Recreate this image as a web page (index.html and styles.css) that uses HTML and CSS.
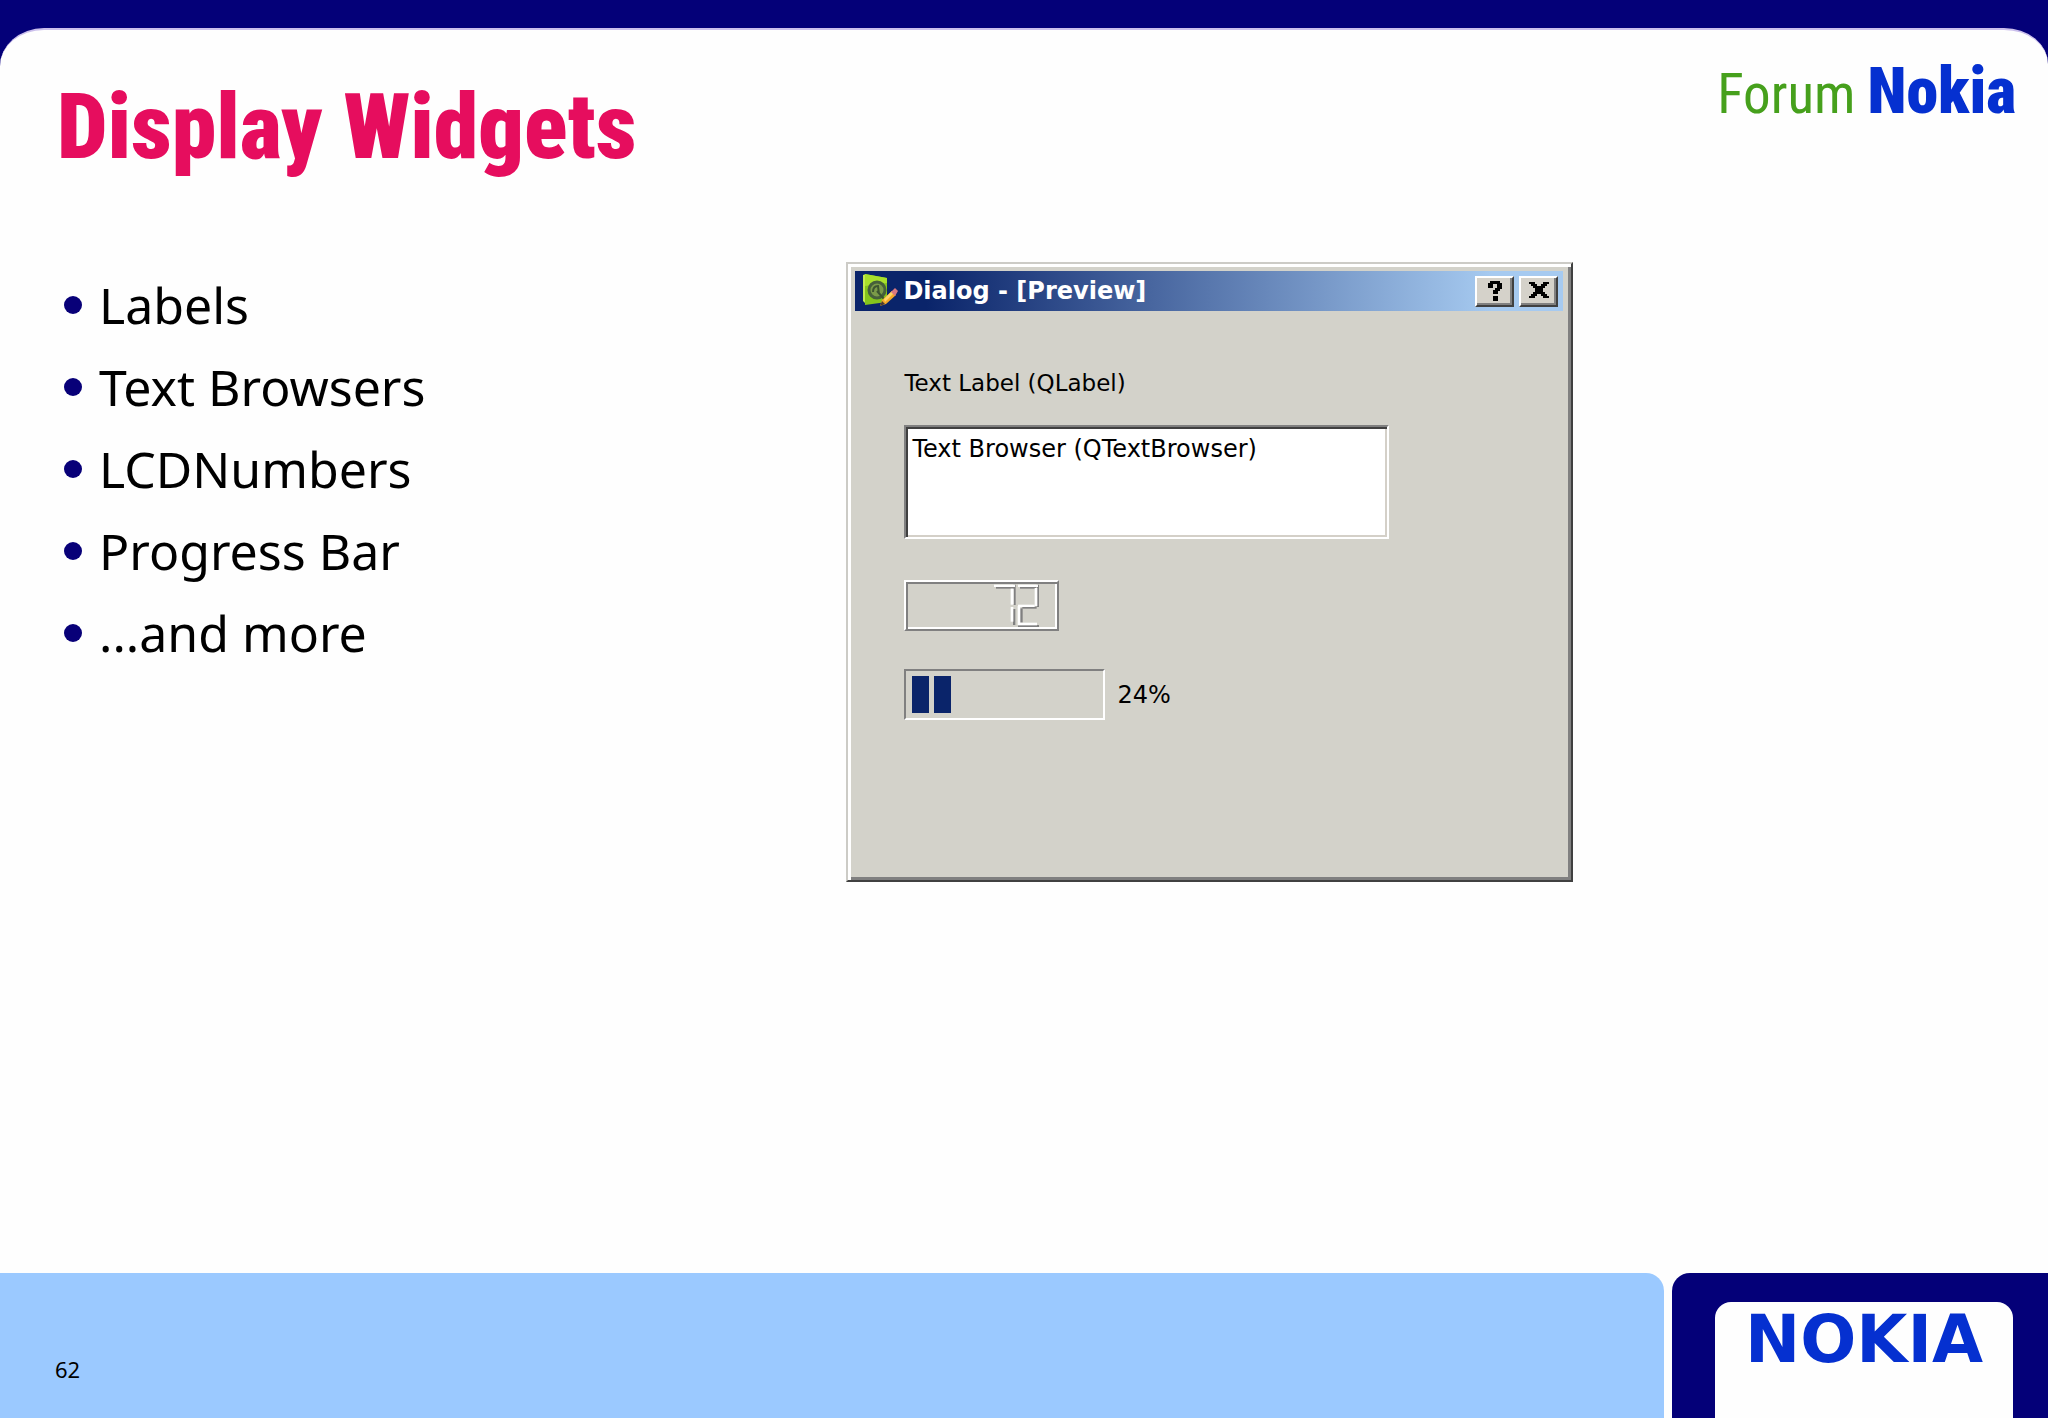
FILE: index.html
```
<!DOCTYPE html>
<html lang="en">
<head>
<meta charset="utf-8">
<title>Display Widgets</title>
<link rel="stylesheet" href="styles.css">
</head>
<body>
<main class="slide">
  <header class="slide-header">
    <h1 class="slide-title">Display Widgets</h1>
    <p class="forum-logo"><span class="forum">Forum</span><span class="brand">Nokia</span></p>
  </header>
  <div class="content">
    <ul class="topics">
      <li>Labels</li>
      <li>Text Browsers</li>
      <li>LCDNumbers</li>
      <li>Progress Bar</li>
      <li>...and more</li>
    </ul>
    <section class="dialog" aria-label="Dialog preview">
      <div class="titlebar">
        <svg class="app-icon" viewBox="0 0 36 34" aria-hidden="true">
          <path d="M1 1 4 0v30l-3-3z" fill="#c4ec50"/>
          <path d="M3 0 25 4v24L3 31z" fill="#84c41c"/>
          <path d="M3 0 25 4v5L3 12z" fill="#a8e02c"/>
          <circle cx="15" cy="16" r="8" fill="#7a9a48" stroke="#46603a" stroke-width="3"/>
          <path d="M11 18q0-6 5-6l1 8m-2-3 7 8" fill="none" stroke="#3c5430" stroke-width="2"/>
          <path d="M18 32 20 26 30 17 34 21 24 30z" fill="#f4a828"/>
          <path d="M22 25 30 17 32 19 23 28z" fill="#ffd468"/>
          <path d="M29 18 33 14 36 17 33 22z" fill="#d87880"/>
          <path d="M18 32 20 27 23 30z" fill="#4a3c30"/>
        </svg>
        <h2 class="dialog-title">Dialog - [Preview]</h2>
        <button class="tool" type="button" aria-label="Help">
          <svg viewBox="0 0 20 20" aria-hidden="true" shape-rendering="crispEdges"><path d="M5 0h10v2h2v6h-2v2h-2v3H8V9h2V7h2V3H8v4H3V2h2zM8 15h5v5H8z"/></svg>
        </button>
        <button class="tool" type="button" aria-label="Close">
          <svg viewBox="0 0 20 20" aria-hidden="true" shape-rendering="crispEdges"><path d="M0 1h6v2h2v2h4V3h2V1h6v2h-2v2h-2v2h-2v4h2v2h2v2h2v2h-6v-2h-2v-2H8v2H6v2H0v-2h2v-2h2v-2h2V7H4V5H2V3H0z"/></svg>
        </button>
      </div>
      <div class="dialog-body">
        <label class="text" for="browser">Text Label (QLabel)</label>
        <textarea class="browser" id="browser" readonly>Text Browser (QTextBrowser)</textarea>
        <div class="lcd" role="img" aria-label="72">
          <svg viewBox="42 60 465 153" aria-hidden="true">
            <g fill="#808080">
              <rect x="318" y="80" width="57" height="6"/><rect x="370" y="74" width="7" height="61"/><rect x="369" y="147" width="7" height="48"/>
              <rect x="390" y="80" width="48" height="6"/><rect x="440" y="74" width="7" height="67"/><rect x="397" y="140" width="43" height="6"/>
              <rect x="390" y="145" width="8" height="43"/><rect x="384" y="195" width="63" height="6"/>
            </g>
            <g fill="#fff">
              <rect x="312" y="74" width="63" height="7"/><rect x="362" y="86" width="9" height="48"/><rect x="362" y="141" width="8" height="44"/>
              <rect x="384" y="74" width="60" height="7"/><rect x="434" y="84" width="8" height="54"/><rect x="384" y="134" width="50" height="7"/>
              <rect x="383" y="138" width="8" height="57"/><rect x="384" y="188" width="57" height="8"/>
            </g>
          </svg>
        </div>
        <div class="progress-row">
          <progress class="bar" id="progress" max="100" value="24"></progress>
          <label class="percent" for="progress">24%</label>
        </div>
      </div>
    </section>
  </div>
</main>
<footer class="slide-footer">
  <div class="page-strip">62</div>
  <div class="brand-strip"><p class="nokia">NOKIA</p></div>
</footer>
</body>
</html>
```
FILE: styles.css
```
* { box-sizing: border-box; margin: 0; }

body {
  display: flex;
  flex-direction: column;
  min-height: 100vh;
  background: linear-gradient(#040078 200px, #fefefe 200px);
  font-family: "Noto Sans", sans-serif;
  color: #000;
}

.slide {
  flex: 1;
  margin-top: 28px;
  padding: 26px 32px 40px 57px;
  border-top: 2px solid #cbbfec;
  border-radius: 44px 44px 0 0 / 38px 36px 0 0;
  background: #fefefe;
}

.slide-header {
  display: flex;
  justify-content: space-between;
  align-items: flex-start;
  padding-bottom: 80px;
}

.slide-title {
  padding-top: 18px;
  font: 900 90px/108px "Roboto Condensed", Roboto, sans-serif;
  color: #e60d5e;
}

.forum-logo {
  display: flex;
  align-items: baseline;
  gap: 12px;
  font: 400 55px/72px "Roboto Condensed", Roboto, sans-serif;
}

.forum { color: #46a01c; }
.brand { color: #0530d0; font-size: 64px; font-weight: 900; }

.content {
  display: grid;
  grid-template-columns: 27fr 40fr;
  align-items: start;
}

.topics {
  margin-top: 2px;
  padding: 0 0 0 7px;
  list-style: none;
  font-size: 50px;
  line-height: 82px;
}

.topics li {
  display: flex;
  align-items: center;
  gap: 17px;
}

.topics li::before {
  content: "";
  width: 18px;
  height: 18px;
  border-radius: 50%;
  background: #080078;
}

.dialog {
  max-width: 727px;
  padding: 4px 5px 160px 4px;
  border: 2px solid;
  border-color: #cccbc6 #404040 #404040 #cccbc6;
  background: #d3d2ca;
  box-shadow: inset 3px 3px #fff, inset -3px -3px #808080;
  font-family: "DejaVu Sans", sans-serif;
}

.titlebar {
  display: flex;
  align-items: center;
  gap: 5px;
  height: 40px;
  margin: 3px 3px 0;
  padding: 0 5px 0 7px;
  background: linear-gradient(90deg, #0a246a, #0a246a 10%, #a6caf0 90%);
}

.app-icon { width: 36px; height: 34px; }

.dialog-title {
  flex: 1;
  font-size: 24px;
  line-height: 32px;
  color: #fff;
}

.tool {
  display: grid;
  place-items: center;
  width: 39px;
  height: 31px;
  padding: 0;
  border: 2px solid;
  border-color: #fff #404040 #404040 #fff;
  background: #d5d2ca;
  box-shadow: inset -2px -2px #808080;
}

.tool svg { width: 20px; height: 20px; }

.dialog-body {
  display: flex;
  flex-direction: column;
  align-items: flex-start;
  padding: 56px 50px 0 52px;
}

.text { font-size: 23px; line-height: 32px; }
.percent { font-size: 24px; line-height: 32px; }

.browser {
  width: 485px;
  max-width: 100%;
  height: 114px;
  margin: 26px 0 41px;
  padding: 6px;
  border: 2px solid;
  border-color: #808080 #fff #fff #808080;
  border-radius: 0;
  outline: 0;
  resize: none;
  background: #fff;
  box-shadow: inset 2px 2px #404040, inset -2px -2px #d4d0c8;
  font: 24px/32px "DejaVu Sans", sans-serif;
  color: #000;
}

.lcd {
  width: 155px;
  height: 51px;
  border: 2px solid;
  border-color: #fff #808080 #808080 #fff;
  box-shadow: inset 2px 2px #808080, inset -2px -2px #fff;
}

.lcd svg { display: block; width: 155px; height: 51px; margin: -2px; }

.progress-row {
  display: flex;
  align-items: center;
  gap: 12px;
  margin-top: 38px;
}

.bar {
  appearance: none;
  width: 201px;
  height: 51px;
  padding: 5px 8px 5px 6px;
  border: 2px solid;
  border-color: #808080 #fff #fff #808080;
  background: #d3d2ca;
}

.bar::-webkit-progress-bar { background: none; }

.bar::-webkit-progress-value {
  background: repeating-linear-gradient(90deg, #0a246a 0 17px, transparent 17px 22px);
}

.slide-footer {
  display: flex;
  gap: 8px;
  background: #fefefe;
}

.page-strip {
  flex: 1;
  padding: 80px 55px 33px;
  border-radius: 0 18px 0 0;
  background: #9bc9ff;
  font-size: 22px;
  line-height: 32px;
}

.brand-strip {
  width: 376px;
  padding: 29px 35px 0 43px;
  border-radius: 18px 0 0 0;
  background: #040078;
}

.nokia {
  height: 100%;
  border-radius: 16px 16px 0 0;
  background: #fefefe;
  font: 700 66px/76px "DejaVu Sans", sans-serif;
  text-align: center;
  color: #0530d0;
}
```
